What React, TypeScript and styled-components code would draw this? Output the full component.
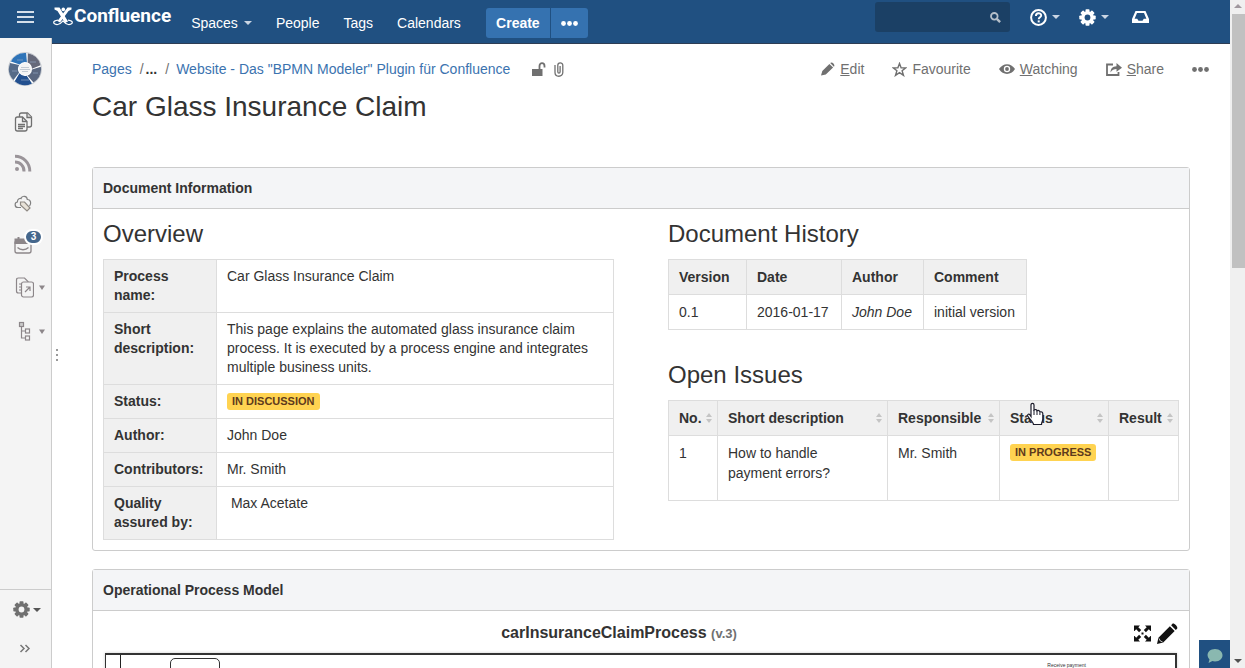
import React from 'react';
import styled, { createGlobalStyle } from 'styled-components';

const Global = createGlobalStyle`
  * { box-sizing: border-box; }
  body {
    margin: 0;
    background: #fff;
    color: #333;
    font: 14px/20px "Liberation Sans", Arial, sans-serif;
    overflow: hidden;
  }
  button, input { font: inherit; }
  a { color: #3b73af; text-decoration: none; }
`;

const Frame = styled.div`
  display: flex;
  height: 100vh;
  overflow: hidden;
`;
const Shell = styled.div`
  position: relative;
  display: flex;
  flex-direction: column;
  flex: 1;
  min-width: 0;
`;

/* ---------- window scroll bar ---------- */
const ScrollTrack = styled.div`
  display: flex;
  flex-direction: column;
  width: 15px;
  flex: none;
  background: #f0f0f0;
`;
const ScrollArrow = styled.svg`
  display: block;
  width: 15px;
  height: 14px;
  flex: none;
`;
const ScrollThumb = styled.div`
  height: 38%;
  margin-left: 2px;
  background: #c1c1c1;
`;
const Grow = styled.div`
  flex: 1;
`;

/* ---------- header ---------- */
const Header = styled.header`
  display: flex;
  align-items: flex-start;
  flex: none;
  height: 44px;
  background: #205081;
  border-bottom: 1px solid #2e3d54;
  color: #fff;
`;
const PlainButton = styled.button`
  display: flex;
  align-items: center;
  padding: 0;
  border: 0;
  background: none;
  color: inherit;
  cursor: pointer;
`;
const MenuButton = styled(PlainButton)`
  height: 34px;
  margin-left: 17px;
`;
const Logo = styled.a`
  display: flex;
  align-items: center;
  gap: 1px;
  height: 32px;
  margin-left: 19px;
  color: #fff;
  font: bold 19px/32px Roboto, sans-serif;
`;
const Nav = styled.nav`
  display: flex;
  align-items: center;
  gap: 24px;
  height: 30px;
  margin: 8px 0 0 20px;
`;
const NavLink = styled.a`
  display: flex;
  align-items: center;
  gap: 6px;
  color: #fff;
`;
const CreateGroup = styled.div`
  display: flex;
  gap: 1px;
  height: 30px;
  margin-left: 1px;
`;
const CreateButton = styled.button<{ $side: 'left' | 'right' }>`
  display: flex;
  align-items: center;
  justify-content: center;
  width: ${p => (p.$side === 'left' ? 64 : 37)}px;
  padding: 0;
  border: 0;
  border-radius: ${p => (p.$side === 'left' ? '3px 0 0 3px' : '0 3px 3px 0')};
  background: #3572b0;
  color: #fff;
  font-weight: bold;
`;
const Tools = styled.div`
  display: flex;
  align-items: center;
  height: 30px;
  margin: 2px 81px 0 auto;
`;
const Search = styled.label`
  display: flex;
  align-items: center;
  width: 135px;
  height: 30px;
  margin-right: 20px;
  padding: 0 9px;
  border-radius: 3px;
  background: #1b4065;
`;
const SearchInput = styled.input`
  flex: 1;
  min-width: 0;
  border: 0;
  outline: 0;
  background: none;
  color: #ccc;
`;
const ToolButton = styled(PlainButton)`
  gap: 5px;
  margin-right: 19px;
  &:last-child { margin: 0 0 0 4px; }
`;

/* ---------- side bar ---------- */
const Body = styled.div`
  display: flex;
  flex: 1;
  min-height: 0;
`;
const Sidebar = styled.aside`
  position: relative;
  display: flex;
  flex-direction: column;
  width: 52px;
  flex: none;
  margin-top: -6px;
  background: #f4f4f4;
  border-right: 1px solid #ccc;
`;
const Avatar = styled.a`
  display: block;
  height: 34px;
  margin: 14px 0 15px 8px;
`;
const SideItem = styled.a<{ $tall?: boolean }>`
  position: relative;
  display: flex;
  align-items: center;
  gap: 5px;
  height: ${p => (p.$tall ? 44 : 41)}px;
  padding-left: 14px;
`;
const Count = styled.span`
  position: absolute;
  left: 24px;
  top: 5px;
  width: 19px;
  height: 16px;
  border: 2px solid #fff;
  border-radius: 8px;
  background: #45678c;
  color: #fff;
  font-size: 10px;
  font-weight: bold;
  line-height: 12px;
  text-align: center;
`;
const SideFoot = styled.div`
  display: flex;
  flex-direction: column;
  height: 79px;
  margin-top: auto;
  border-top: 1px solid #ccc;
`;
const FootButton = styled(PlainButton)`
  gap: 3px;
  height: 40px;
  padding-left: 13px;
`;
const Grip = styled.div`
  display: flex;
  flex-direction: column;
  gap: 3px;
  width: 2px;
  margin: 305px 0 0 4px;
  flex: none;
`;
const Dot = styled.i`
  height: 2px;
  background: #999;
`;

/* ---------- page ---------- */
const Main = styled.main`
  flex: 1;
  min-width: 0;
  overflow: hidden;
  padding: 15px 40px 0 34px;
`;
const TopLine = styled.div`
  display: flex;
  align-items: center;
  height: 20px;
`;
const Crumbs = styled.nav`
  display: flex;
  align-items: center;
  white-space: nowrap;
`;
const Slash = styled.span`
  margin: 0 7px 0 8px;
  color: #707070;
`;
const More = styled.b`
  margin-left: -5px;
`;
const Marks = styled.span`
  display: flex;
  align-items: center;
  gap: 8px;
  margin-left: 22px;
`;
const Actions = styled.div`
  display: flex;
  align-items: center;
  gap: 28px;
  margin: 0 -19px 0 auto;
`;
const Action = styled(PlainButton)`
  gap: 5px;
  color: #707070;
`;
const Title = styled.h1`
  margin: 12px 0 44px;
  font-size: 28px;
  font-weight: normal;
  line-height: 32px;
`;
const Panel = styled.section`
  margin-bottom: 18px;
  border: 1px solid #ccc;
  border-radius: 3px;
`;
const PanelHead = styled.h2`
  margin: 0;
  padding: 10px;
  border-bottom: 1px solid #ccc;
  background: #f4f5f7;
  font-size: 14px;
  line-height: 20px;
`;
const Columns = styled.div`
  display: grid;
  grid-template-columns: 1fr 1fr;
  gap: 54px;
  padding: 10px;
`;
const SubHead = styled.h3`
  margin: 0 0 10px;
  font-size: 24px;
  font-weight: normal;
  line-height: 30px;
`;
const Table = styled.table<{ $full?: boolean }>`
  width: ${p => (p.$full ? '100%' : 'auto')};
  border-collapse: collapse;
  margin-bottom: 30px;
  th, td {
    padding: 7px 10px;
    border: 1px solid #ddd;
    text-align: left;
    vertical-align: top;
  }
  th { background: #f0f0f0; }
  &:last-child { margin-bottom: 0; }
`;
const FactTable = styled(Table)`
  line-height: 19px;
  th { width: 113px; }
`;
const Col = styled.col<{ $w?: number }>`
  width: ${p => (p.$w ? `${p.$w}px` : 'auto')};
`;
const SortTh = styled.th`
  position: relative;
  white-space: nowrap;
`;
const SortLabel = styled.span`
  display: flex;
  align-items: center;
  justify-content: space-between;
  margin-right: -5px;
`;
const Para = styled.p`
  margin: 0 0 10px;
`;
const Pointer = styled.svg`
  position: absolute;
  left: 26px;
  top: 1px;
`;
const Lozenge = styled.span`
  display: inline-block;
  margin-top: 1px;
  padding: 0 5px;
  border-radius: 3px;
  background: #ffd351;
  color: #5e3a1c;
  font-size: 11px;
  font-weight: bold;
  line-height: 17px;
  vertical-align: top;
  white-space: nowrap;
`;

/* ---------- process diagram ---------- */
const DiagramHead = styled.div`
  display: grid;
  grid-template-columns: 1fr auto;
  align-items: center;
  height: 42px;
  padding: 2px 11px 0;
  text-align: center;
`;
const DiagramName = styled.h3`
  margin: 0;
  font-size: 16px;
  line-height: 20px;
`;
const Version = styled.small`
  color: #707070;
  font-size: 13px;
`;
const DiagramTools = styled.div`
  display: flex;
  justify-content: flex-end;
  gap: 6px;
`;
const Pool = styled.div`
  display: flex;
  height: 300px;
  margin: 0 12px 10px;
  border: 2px solid #333;
  border-left-width: 1px;
  box-shadow: 0 0 3px #ccc;
`;
const Lane = styled.div`
  width: 15px;
  border-right: 1px solid #222;
`;
const Task = styled.div`
  width: 50px;
  height: 40px;
  margin: 3px 0 0 49px;
  border: 1px solid #333;
  border-radius: 5px;
`;
const TaskName = styled.span`
  margin: 7px 89px 0 auto;
  font-size: 5px;
  line-height: 6px;
`;
const Feedback = styled.button`
  position: absolute;
  right: 0;
  bottom: 0;
  width: 31px;
  height: 28px;
  padding: 8px 0 0 1px;
  border: 0;
  background: #205081;
`;

const Caret = ({ color = '#c9d5e3' }: { color?: string }) => (
  <svg width="8" height="4" viewBox="0 0 8 4" aria-hidden="true">
    <path d="M0 0h8L4 4z" fill={color} />
  </svg>
);
const SmallCaret = () => (
  <svg width="6" height="5" viewBox="0 0 6 5" aria-hidden="true">
    <path d="M0 .5h6L3 5z" fill="#8c8689" />
  </svg>
);
const Dots = ({ color }: { color: string }) => (
  <svg width="17" height="5" viewBox="0 0 17 5" fill={color} aria-hidden="true">
    <circle cx="2.5" cy="2.5" r="2.4" />
    <circle cx="8.5" cy="2.5" r="2.4" />
    <circle cx="14.5" cy="2.5" r="2.4" />
  </svg>
);
const Gear = ({ color }: { color: string }) => (
  <svg width="17" height="17" viewBox="-8.5 -8.5 17 17" aria-hidden="true">
    <g fill={color}>
      {[0, 45, 90, 135].map(a => (
        <rect key={a} x="-2" y="-8.2" width="4" height="16.4" rx="0.8" transform={`rotate(${a})`} />
      ))}
      <circle r="6.2" />
    </g>
    <circle r="2.9" fill={color === '#fff' ? '#205081' : '#f4f4f4'} />
  </svg>
);
const Sorter = () => (
  <svg width="6" height="10" viewBox="0 0 6 10" fill="#c4c4c4" aria-hidden="true">
    <path d="M0 4l3-4 3 4zM0 6h6l-3 4z" />
  </svg>
);

const segment = (from: number, to: number) => {
  const p = (r: number, d: number) =>
    `${(17 + r * Math.cos((d * Math.PI) / 180)).toFixed(2)} ${(17 + r * Math.sin((d * Math.PI) / 180)).toFixed(2)}`;
  return `M${p(16, from)}A16 16 0 0 1 ${p(16, to)}L${p(7, to + 12)}A7 7 0 0 0 ${p(7, from + 12)}z`;
};
const SpaceLogo = () => (
  <svg width="34" height="34" viewBox="0 0 34 34" aria-hidden="true">
    <circle cx="17" cy="17" r="16.5" fill="#fff" stroke="#c8ccd2" />
    {['#66697a', '#5a6780', '#22508f', '#566b88', '#2f74b8'].map((c, i) => (
      <path key={c} d={segment(-80 + i * 72, -14 + i * 72)} fill={c} />
    ))}
    <path d="M9 8h6M22 10h6M25 21h5M13 28h8M4 19h5" stroke="#8fa5c2" strokeWidth=".7" />
    <circle cx="17" cy="17" r="6" fill="#f4f4f4" />
    <path d="M13 15.500h8M12 17.500h10M14 19.500h6" stroke="#b5bfca" strokeWidth=".8" />
  </svg>
);

const facts: [string, React.ReactNode][] = [
  ['Process name:', 'Car Glass Insurance Claim'],
  ['Short description:', 'This page explains the automated glass insurance claim process. It is executed by a process engine and integrates multiple business units.'],
  ['Status:', <Lozenge key="s">IN DISCUSSION</Lozenge>],
  ['Author:', 'John Doe'],
  ['Contributors:', 'Mr. Smith'],
  ['Quality assured by:', '\u00a0Max Acetate'],
];

export default function App() {
  return (
    <Frame>
      <Global />
      <Shell>
        <Header>
          <MenuButton aria-label="Menu">
            <svg width="17" height="12" viewBox="0 0 17 12" fill="#d5dfea">
              <path d="M0 0h17v2H0zM0 5h17v2H0zM0 10h17v2H0z" />
            </svg>
          </MenuButton>
          <Logo href="#home">
            <svg width="20" height="19" viewBox="0 0 20 19" aria-hidden="true">
              <path d="M1.500 .5h5l8.500 14-3 1.500L4.500 4 1.500 2.500z" fill="#fff" />
              <path d="M18.500 .5h-4L4.500 14l2.500 1.500L15.500 4l3-1.500z" fill="#fff" />
              <circle cx="10.300" cy="2.400" r="1.800" fill="#fff" />
              <path d="M5 13.200c-3 .4-4.300 1.300-4.300 2.300 0 1.300 2 2.200 4 2 2.800-.3 4-2.200 5.300-3.700 1.300 1.500 2.500 3.400 5.300 3.700 2 .2 4-.7 4-2 0-1-1.300-1.900-4.300-2.300" fill="none" stroke="#fff" strokeWidth="1.200" />
            </svg>
            Confluence
          </Logo>
          <Nav>
            <NavLink href="#spaces">Spaces <Caret /></NavLink>
            <NavLink href="#people">People</NavLink>
            <NavLink href="#tags">Tags</NavLink>
            <NavLink href="#calendars">Calendars</NavLink>
            <CreateGroup>
              <CreateButton $side="left">Create</CreateButton>
              <CreateButton $side="right" aria-label="More create options"><Dots color="#fff" /></CreateButton>
            </CreateGroup>
          </Nav>
          <Tools>
            <Search>
              <SearchInput type="search" aria-label="Search" />
              <svg width="11" height="11" viewBox="0 0 11 11" fill="none" stroke="#b5bfca" aria-hidden="true">
                <circle cx="4.300" cy="4.300" r="3.300" strokeWidth="1.800" />
                <path d="M6.800 6.800l3.300 3.300" strokeWidth="2.400" />
              </svg>
            </Search>
            <ToolButton aria-label="Help">
              <svg width="17" height="17" viewBox="0 0 17 17" fill="none" stroke="#fff">
                <circle cx="8.500" cy="8.500" r="7.400" strokeWidth="2" />
                <path d="M5.900 7c0-3.600 5.300-3.400 5.300-.6 0 1.900-2.500 1.900-2.500 3.900" strokeWidth="1.900" />
                <path d="M7.700 12.400h2" strokeWidth="2" />
              </svg>
              <Caret />
            </ToolButton>
            <ToolButton aria-label="Administration"><Gear color="#fff" /><Caret /></ToolButton>
            <ToolButton aria-label="Notifications">
              <svg width="17" height="12" viewBox="0 0 17 12">
                <path fillRule="evenodd" fill="#fff" d="M3.500 0h10L17 8v4H0V8zM5 2L2.600 7.800h2.600l1.300 2h4l1.300-2h2.600L12 2z" />
              </svg>
            </ToolButton>
          </Tools>
        </Header>

        <Body>
          <Sidebar>
            <Avatar href="#space" aria-label="Space"><SpaceLogo /></Avatar>
            <SideItem href="#pages" aria-label="Pages">
              <svg width="19" height="20" viewBox="0 0 19 20" fill="#f4f4f4" stroke="#707070" strokeWidth="1.300">
                <path d="M7.500 1h6l4 4v8c0 1.500-.5 2-2 2h-8c-1.500 0-2-.5-2-2V3c0-1.500.5-2 2-2z" />
                <path d="M13 1v4.500h4.500" fill="#ddd" />
                <path d="M3.500 5h5l4.500 4.500V17c0 1.500-.5 2-2 2H3.500c-1.500 0-2-.5-2-2V7c0-1.500.5-2 2-2z" />
                <path d="M8.500 5v4.500H13M4 12.500h7M4 14.500h7M4 16.500h5" fill="none" />
              </svg>
            </SideItem>
            <SideItem href="#blog" aria-label="Blog">
              <svg width="18" height="18" viewBox="0 0 18 18" fill="none" stroke="#9a9499" strokeWidth="3">
                <circle cx="3" cy="15" r="2" fill="#9a9499" stroke="none" />
                <path d="M1 8a9 9 0 0 1 9 9.500M1 2.200A14.800 14.800 0 0 1 15.800 17.500" />
              </svg>
            </SideItem>
            <SideItem href="#labels" aria-label="Labels">
              <svg width="18" height="17" viewBox="0 0 18 17" fill="none" stroke="#808080" strokeWidth="1.200">
                <path d="M7 12.500H4C.3 12.500 .3 7.300 3.400 7 3.300 3.500 6.500 3.100 7 3.500c1-3.200 6-3 6.300 1 4 .2 4 4.500 2.200 6.500" />
                <path d="M6.500 7h4l5.500 6-3 3-6.500-6z" fill="#e8e2d8" stroke="#8f8a84" />
              </svg>
            </SideItem>
            <SideItem href="#calendar" aria-label="Calendar">
              <svg width="18" height="18" viewBox="0 0 18 18" fill="none" stroke="#8c8689" strokeWidth="1.300">
                <path d="M1 5.500V15c0 1.200.8 2 2 2h12c1.200 0 2-.8 2-2V5.500" />
                <path d="M.5 2.500h3V1h2v1.500h6V1H14v1.500h3.500V8H.5z" fill="#8c8689" stroke="none" />
                <path d="M3.500 11.500c3 3 8 3 11 0" />
              </svg>
              <Count>3</Count>
            </SideItem>
            <SideItem $tall href="#shortcuts" aria-label="Shortcuts">
              <svg width="20" height="21" viewBox="0 0 20 21" fill="#f4f4f4" stroke="#8c8689" strokeWidth="1.200">
                <path d="M4.500 1h6L14 4.500V16H4.500c-1.500 0-2-.5-2-2V3c0-1.500.5-2 2-2z" />
                <path d="M5 7h3M5 10h3M5 13h3" />
                <rect x="7.500" y="5" width="12" height="15" rx="2" />
                <path d="M11 15l5-5M12 10h4v4" fill="none" />
              </svg>
              <SmallCaret />
            </SideItem>
            <SideItem $tall href="#tree" aria-label="Page tree">
              <svg width="20" height="20" viewBox="0 0 20 20" fill="none" stroke="#8c8689" strokeWidth="1.200">
                <path d="M7.500 5v12H12M7.500 10H12" />
                <rect x="5.500" y="1.500" width="4" height="4" fill="#ccc" />
                <rect x="11.500" y="8" width="4" height="4" />
                <rect x="11.500" y="15" width="4" height="4" />
              </svg>
              <SmallCaret />
            </SideItem>
            <SideFoot>
              <FootButton aria-label="Space tools"><Gear color="#707070" /><Caret color="#555" /></FootButton>
              <FootButton aria-label="Expand sidebar">
                <svg width="24" height="9" viewBox="0 0 24 9" fill="none" stroke="#777" strokeWidth="1.500">
                  <path d="M7.500 1l3.500 3.500L7.500 8M12.500 1L16 4.500 12.500 8" />
                </svg>
              </FootButton>
            </SideFoot>
          </Sidebar>
          <Grip><Dot /><Dot /><Dot /></Grip>

          <Main>
            <TopLine>
              <Crumbs aria-label="Breadcrumb">
                <a href="#pages">Pages</a>
                <Slash>/</Slash><More>...</More><Slash>/</Slash>
                <a href="#website">Website - Das "BPMN Modeler" Plugin für Confluence</a>
              </Crumbs>
              <Marks>
                <svg width="14" height="15" viewBox="0 0 14 15" aria-hidden="true">
                  <path d="M0 7h10.500v7H0z" fill="#707070" />
                  <path d="M7.500 8V4c0-3.800 5-3.800 5 0v1.500" fill="none" stroke="#707070" strokeWidth="1.800" />
                </svg>
                <svg width="10" height="15" viewBox="0 0 10 15" fill="none" stroke="#707070" strokeWidth="1.300" aria-hidden="true">
                  <path d="M1 3v7.500c0 5 7.800 5 7.800 0V3.200c0-3-5-3-5 0v6.600c0 1.800 2.300 1.800 2.300 0V4" />
                </svg>
              </Marks>
              <Actions>
                <Action>
                  <svg width="14" height="14" viewBox="0 0 14 14" fill="#707070" aria-hidden="true">
                    <path d="M0 13.500l1.300-4.500L8.400 1.900l3.700 3.700-7.300 7zM9.200 1.100c1.800-2 5.500 1.500 3.700 3.700z" />
                  </svg>
                  <span><u>E</u>dit</span>
                </Action>
                <Action>
                  <svg width="15" height="15" viewBox="0 0 15 15" fill="none" stroke="#707070" strokeWidth="1.400" aria-hidden="true">
                    <path d="M7.500 1.500l1.600 4.300 4.700.1L10.100 8.800l1.400 4.600-4-2.700-4 2.700 1.400-4.600L1.200 5.900l4.700-.1z" />
                  </svg>
                  Favourite
                </Action>
                <Action>
                  <svg width="16" height="10" viewBox="0 0 16 10" aria-hidden="true">
                    <path d="M0 5c4-6.500 12-6.500 16 0-4 6.500-12 6.500-16 0z" fill="#707070" />
                    <circle cx="8" cy="5" r="3.200" fill="#fff" />
                    <circle cx="8" cy="5" r="1.900" fill="#707070" />
                  </svg>
                  <span><u>W</u>atching</span>
                </Action>
                <Action>
                  <svg width="16" height="13" viewBox="0 0 16 13" aria-hidden="true">
                    <path d="M7 1.500H1V12h11.500V9" fill="none" stroke="#707070" strokeWidth="1.800" />
                    <path d="M4.500 9.500c0-4 2-6.200 6-6.300V0L16 4.700l-5.500 4V6C8 6 6 6.500 4.500 9.500z" fill="#707070" />
                  </svg>
                  <span><u>S</u>hare</span>
                </Action>
                <Action aria-label="More actions"><Dots color="#707070" /></Action>
              </Actions>
            </TopLine>
            <Title>Car Glass Insurance Claim</Title>

            <Panel>
              <PanelHead>Document Information</PanelHead>
              <Columns>
                <div>
                  <SubHead>Overview</SubHead>
                  <FactTable $full>
                    <tbody>
                      {facts.map(([k, v]) => (
                        <tr key={k}><th scope="row">{k}</th><td>{v}</td></tr>
                      ))}
                    </tbody>
                  </FactTable>
                </div>
                <div>
                  <SubHead>Document History</SubHead>
                  <Table>
                    <colgroup><Col $w={78} /><Col $w={95} /><Col $w={82} /><Col $w={103} /></colgroup>
                    <thead>
                      <tr><th>Version</th><th>Date</th><th>Author</th><th>Comment</th></tr>
                    </thead>
                    <tbody>
                      <tr><td>0.1</td><td>2016-01-17</td><td><em>John Doe</em></td><td>initial version</td></tr>
                    </tbody>
                  </Table>
                  <SubHead>Open Issues</SubHead>
                  <Table $full>
                    <colgroup><Col $w={49} /><Col /><Col $w={112} /><Col $w={109} /><Col $w={70} /></colgroup>
                    <thead>
                      <tr>
                        {['No.', 'Short description', 'Responsible', 'Status', 'Result'].map(h => (
                          <SortTh key={h}>
                            <SortLabel>{h}<Sorter /></SortLabel>
                            {h === 'Status' && (
                              <Pointer width="20" height="26" viewBox="0 0 20 26" aria-hidden="true">
                                <path
                                  d="M5 14.500V3c0-2.300 3-2.300 3 0v5c1-.9 2.800-.5 3 .8 1.200-.7 2.700-.2 2.900 1.200 1.500-.6 2.900.2 2.900 1.700V17c0 2-1.300 3-1.300 5.500H7.500c0-2-4-5.500-5.800-8.500-.6-1.800 1.300-2.400 2.300-1z"
                                  fill="#fff" stroke="#1b1b2a" strokeWidth="1.200"
                                />
                                <path d="M8 8v5M11 9v4M13.900 10.500V13" stroke="#1b1b2a" />
                              </Pointer>
                            )}
                          </SortTh>
                        ))}
                      </tr>
                    </thead>
                    <tbody>
                      <tr>
                        <td>1</td>
                        <td><Para>How to handle<br />payment errors?</Para></td>
                        <td>Mr. Smith</td>
                        <td><Lozenge>IN PROGRESS</Lozenge></td>
                        <td />
                      </tr>
                    </tbody>
                  </Table>
                </div>
              </Columns>
            </Panel>

            <Panel>
              <PanelHead>Operational Process Model</PanelHead>
              <DiagramHead>
                <DiagramName>carInsuranceClaimProcess <Version>(v.3)</Version></DiagramName>
                <DiagramTools>
                  <PlainButton aria-label="Full screen">
                    <svg width="17" height="17" viewBox="0 0 17 17" fill="#111">
                      <path d="M0 .5h6L4.300 2.200l2.900 2.900-2.100 2.100-2.900-2.900L.5 6H0zM17 .5h-6l1.700 1.700-2.900 2.900 2.100 2.100 2.900-2.900L16.500 6h.5zM0 16.500h6l-1.700-1.700 2.900-2.900-2.100-2.100-2.900 2.900L.5 11H0zM17 16.500h-6l1.700-1.700-2.900-2.900 2.100-2.100 2.900 2.900 1.700-1.700h.5zM7.500 7.500h2v2h-2z" />
                    </svg>
                  </PlainButton>
                  <PlainButton aria-label="Edit diagram">
                    <svg width="21" height="21" viewBox="0 0 22 22" fill="#111">
                      <path d="M0 22l1.500-6.500L13.500 3.500l5 5L6.500 20.500zM14.800 2.300L16 1c1.500-1.800 6.500 3 5 5l-1.300 1.300z" />
                      <path d="M2.200 16.200l1.200 2.600 2.400 1" fill="none" stroke="#fff" strokeWidth=".8" />
                    </svg>
                  </PlainButton>
                </DiagramTools>
              </DiagramHead>
              <Pool><Lane /><Task /><TaskName>Receive payment</TaskName></Pool>
            </Panel>
          </Main>
        </Body>

        <Feedback aria-label="Feedback">
          <svg width="16" height="16" viewBox="0 0 16 16" fill="#8ab8b0">
            <path d="M8 1c10 0 10 12.500 0 12.500-1.200 0-2-.2-2.600-.4L1.500 15l1-3.500C-1.800 7 1.500 1 8 1z" />
          </svg>
        </Feedback>
      </Shell>
      <ScrollTrack aria-hidden="true">
        <ScrollArrow viewBox="0 0 15 14"><path d="M4 8h8L8 4z" fill="#a0989e" /></ScrollArrow>
        <ScrollThumb />
        <Grow />
        <ScrollArrow viewBox="0 0 15 14"><path d="M4 5h8L8 9z" fill="#505050" /></ScrollArrow>
      </ScrollTrack>
    </Frame>
  );
}
